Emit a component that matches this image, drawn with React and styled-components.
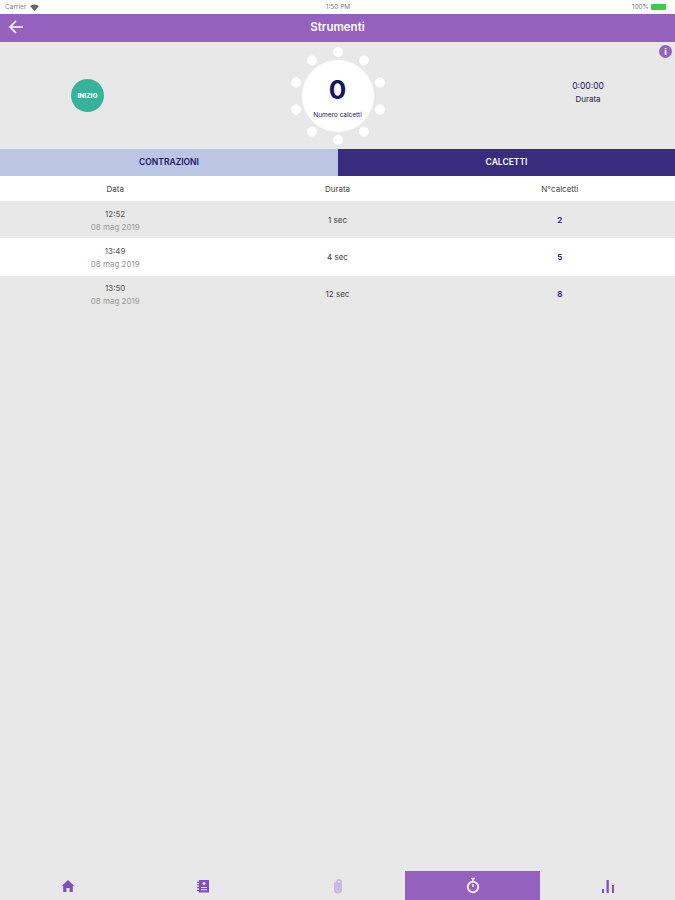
import React from 'react';
import styled, { createGlobalStyle } from 'styled-components';

const GlobalStyle = createGlobalStyle`
  html, body {
    margin: 0;
    padding: 0;
    background: #e8e8e8;
    font-family: Inter, "Open Sans", "Liberation Sans", sans-serif;
  }
`;

const colors = {
  purple: '#9561bf',
  navy: '#1a1464',
  indigo: '#392b7d',
  periwinkle: '#bac6e3',
  gray: '#e8e8e8',
  green: '#35b39b',
};

const Page = styled.div`
  width: 675px;
  height: 900px;
  display: flex;
  flex-direction: column;
  overflow: hidden;
  background: ${colors.gray};
`;

const StatusBar = styled.div`
  height: 14px;
  padding: 0 4px 0 5px;
  display: grid;
  grid-template-columns: 1fr auto 1fr;
  align-items: center;
  background: #fff;
  color: #808080;
  font-size: 6.5px;
`;

const StatusLeft = styled.div`
  display: flex;
  align-items: center;
  gap: 4px;
`;

const StatusRight = styled.div`
  display: flex;
  align-items: center;
  justify-content: flex-end;
  gap: 2px;
`;

const Battery = styled.span`
  width: 15px;
  height: 6px;
  margin-right: 5px;
  background: #3ccb4a;
  border-radius: 1px;
`;

const NavBar = styled.header`
  position: relative;
  height: 28px;
  padding-bottom: 2px;
  box-sizing: border-box;
  flex: none;
  display: flex;
  align-items: center;
  justify-content: center;
  background: ${colors.purple};
  color: #fff;
  font-size: 11.5px;
  font-weight: 600;
`;

const BackButton = styled.span`
  position: absolute;
  left: 8px;
  top: 5px;
  display: flex;
`;

const Counter = styled.section`
  position: relative;
  height: 107px;
  flex: none;
  padding: 0 70px 0 71px;
  display: flex;
  align-items: center;
  justify-content: space-between;
  box-sizing: border-box;
`;

const StartButton = styled.div`
  width: 33px;
  height: 33px;
  display: flex;
  align-items: center;
  justify-content: center;
  border-radius: 50%;
  background: ${colors.green};
  color: #fff;
  font-size: 6.5px;
  font-weight: 800;
`;

const Ring = styled.div`
  position: relative;
  width: 98px;
  height: 98px;
  display: flex;
  align-items: center;
  justify-content: center;
`;

const Dot = styled.span`
  position: absolute;
  left: 44px;
  top: 44px;
  width: 10px;
  height: 10px;
  border-radius: 50%;
  background: #fff;
`;

const Disc = styled.div`
  width: 72px;
  height: 72px;
  display: flex;
  flex-direction: column;
  align-items: center;
  border-radius: 50%;
  background: #fff;
  color: ${colors.navy};
`;

const Count = styled.div`
  margin-top: 14px;
  font-size: 26px;
  line-height: 32px;
  font-weight: 700;
`;

const CountLabel = styled.div`
  margin-top: 5px;
  font-size: 6.5px;
  line-height: 8px;
  white-space: nowrap;
`;

const Timer = styled.div`
  width: 34px;
  padding-bottom: 7px;
  display: flex;
  flex-direction: column;
  align-items: center;
  gap: 3px;
  color: ${colors.navy};
  white-space: nowrap;
`;

const TimerValue = styled.div`
  font-size: 8.5px;
  line-height: 10px;
`;

const TimerLabel = styled.div`
  font-size: 8px;
  line-height: 10px;
`;

const InfoBadge = styled.span`
  position: absolute;
  right: 3px;
  top: 3px;
  width: 13px;
  height: 13px;
  display: flex;
  align-items: center;
  justify-content: center;
  border-radius: 50%;
  background: ${colors.purple};
  color: #fff;
  font-size: 9px;
  font-weight: 800;
`;

const Tabs = styled.nav`
  height: 27px;
  flex: none;
  display: grid;
  grid-template-columns: 338px 1fr;
`;

const Tab = styled.div`
  display: flex;
  align-items: center;
  justify-content: center;
  padding-bottom: 1px;
  background: ${({ $active }) => ($active ? colors.indigo : colors.periwinkle)};
  color: ${({ $active }) => ($active ? '#fff' : colors.navy)};
  font-size: 8.5px;
  font-weight: 600;
`;

const Row = styled.div`
  height: ${({ $head }) => ($head ? '25px' : '37.4px')};
  flex: none;
  padding: 0 4px;
  display: grid;
  grid-template-columns: repeat(3, 1fr);
  align-items: center;
  text-align: center;
  background: ${({ $light }) => ($light ? '#fff' : colors.gray)};
  color: #444;
  font-size: 8px;
`;

const DateCell = styled.div`
  padding-top: 1px;
  display: flex;
  flex-direction: column;
  gap: 3px;
  line-height: 10px;
`;

const Time = styled.span`
  color: #555;
`;

const Day = styled.span`
  color: #999;
`;

const Kicks = styled.div`
  color: ${colors.indigo};
  font-weight: 700;
`;

const TabBar = styled.footer`
  height: 29px;
  margin-top: auto;
  flex: none;
  display: grid;
  grid-template-columns: repeat(5, 1fr);
`;

const TabBarItem = styled.div`
  display: flex;
  align-items: center;
  justify-content: center;
  background: ${({ $active }) => ($active ? colors.purple : 'transparent')};
  color: ${({ $active, $muted }) =>
    $active ? '#efe6f7' : $muted ? '#c6b4dd' : '#7f4fc0'};
`;

const HomeIcon = () => (
  <svg width="14" height="14" viewBox="0 0 14 14" fill="currentColor">
    <path d="M7 1 L13.5 7.2 H11.8 V13 H8.6 V9 H5.4 V13 H2.2 V7.2 H.5 Z" />
  </svg>
);

const NotebookIcon = () => (
  <svg width="14" height="14" viewBox="0 0 14 14" fill="currentColor">
    <path fillRule="evenodd" d="M3 1 H13 V13.5 H3 Z M8 3 a1.5 1.5 0 1 0 .01 0 Z M5 8 H11 V9 H5 Z M5 10.2 H11 V11.2 H5 Z" />
    <path d="M1 2.5 H3 V3.7 H1 Z M1 5.2 H3 V6.4 H1 Z M1 8 H3 V9.2 H1 Z M1 10.8 H3 V12 H1 Z" />
  </svg>
);

const ClipIcon = () => (
  <svg width="14" height="16" viewBox="0 0 14 16" fill="none" stroke="currentColor" strokeWidth="1.8" strokeLinecap="round">
    <path d="M4 5 V11.5 a3 3 0 0 0 6 0 V3.8 a2 2 0 0 0 -4 0 V11 a1 1 0 0 0 2 0 V5" />
  </svg>
);

const StopwatchIcon = () => (
  <svg width="14" height="17" viewBox="0 0 14 17" fill="none" stroke="currentColor" strokeWidth="2">
    <circle cx="7" cy="10" r="5.2" />
    <path d="M5 1.5 H9 M7 2 V4.5 M7 7 V10" strokeWidth="1.6" />
  </svg>
);

const ChartIcon = () => (
  <svg width="14" height="14" viewBox="0 0 14 14" fill="currentColor">
    <path d="M1 10 H3 V14 H1 Z M5.5 1 H7.8 V14 H5.5 Z M11 6 H13 V14 H11 Z" />
  </svg>
);

const WifiIcon = () => (
  <svg width="9" height="7" viewBox="0 0 9 7" fill="#666">
    <path d="M0 2 Q4.5 -1 9 2 L4.5 7 Z" />
  </svg>
);

const rows = [
  { time: '12:52', duration: '1 sec', kicks: 2 },
  { time: '13:49', duration: '4 sec', kicks: 5, light: true },
  { time: '13:50', duration: '12 sec', kicks: 8 },
];

const dots = Array.from({ length: 10 }, (_, i) => i * 36);

export default function App() {
  return (
    <Page>
      <GlobalStyle />
      <StatusBar>
        <StatusLeft>Carrier <WifiIcon /></StatusLeft>
        <span>1:50 PM</span>
        <StatusRight>100% <Battery /></StatusRight>
      </StatusBar>
      <NavBar>
        <BackButton>
          <svg width="16" height="16" viewBox="0 0 16 16" fill="none" stroke="#fff" strokeWidth="1.7">
            <path d="M15 8 H2 M8 2 L2 8 L8 14" />
          </svg>
        </BackButton>
        Strumenti
      </NavBar>
      <Counter>
        <StartButton>INIZIO</StartButton>
        <Ring>
          {dots.map(angle => (
            <Dot key={angle} style={{ transform: `rotate(${angle}deg) translateY(-44px)` }} />
          ))}
          <Disc>
            <Count>0</Count>
            <CountLabel>Numero calcetti</CountLabel>
          </Disc>
        </Ring>
        <Timer>
          <TimerValue>0:00:00</TimerValue>
          <TimerLabel>Durata</TimerLabel>
        </Timer>
        <InfoBadge>i</InfoBadge>
      </Counter>
      <Tabs>
        <Tab>CONTRAZIONI</Tab>
        <Tab $active>CALCETTI</Tab>
      </Tabs>
      <Row $head $light>
        <div>Data</div>
        <div>Durata</div>
        <div>N°calcetti</div>
      </Row>
      {rows.map(row => (
        <Row key={row.time} $light={row.light}>
          <DateCell>
            <Time>{row.time}</Time>
            <Day>08 mag 2019</Day>
          </DateCell>
          <div>{row.duration}</div>
          <Kicks>{row.kicks}</Kicks>
        </Row>
      ))}
      <TabBar>
        <TabBarItem><HomeIcon /></TabBarItem>
        <TabBarItem><NotebookIcon /></TabBarItem>
        <TabBarItem $muted><ClipIcon /></TabBarItem>
        <TabBarItem $active><StopwatchIcon /></TabBarItem>
        <TabBarItem><ChartIcon /></TabBarItem>
      </TabBar>
    </Page>
  );
}
